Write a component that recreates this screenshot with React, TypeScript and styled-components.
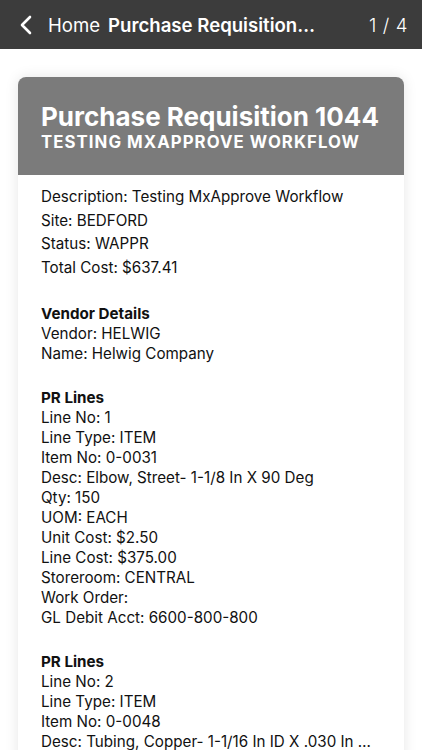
import React from 'react';
import styled, { createGlobalStyle } from 'styled-components';

const GlobalStyle = createGlobalStyle`
  html, body {
    margin: 0;
    padding: 0;
    background: #ffffff;
    font-family: Inter, "Noto Sans", "Liberation Sans", sans-serif;
    color: #111111;
  }
`;

const NavBar = styled.header`
  display: flex;
  align-items: center;
  height: 49px;
  padding: 0 14px 0 19px;
  background: #3c3c3c;
  color: #ffffff;
  font-size: 18.6px;
`;

const BackButton = styled.button`
  display: flex;
  align-items: center;
  gap: 15px;
  padding: 0;
  border: none;
  background: none;
  color: inherit;
  font: inherit;
  cursor: pointer;
`;

const NavTitle = styled.span`
  flex: 1;
  min-width: 0;
  margin-left: 8px;
  font-weight: 600;
  white-space: nowrap;
  overflow: hidden;
  text-overflow: ellipsis;
`;

const Pager = styled.span`
  margin-left: 52px;
  font-weight: 300;
  letter-spacing: 0.6px;
`;

const Page = styled.main`
  padding: 28px 18px 0;
`;

const Card = styled.section`
  border-radius: 8px;
  overflow: hidden;
  background: #ffffff;
  box-shadow: 0 0 14px rgba(0, 0, 0, 0.1);
`;

const CardHeader = styled.div`
  padding: 26px 23px 22px;
  background: #7b7b7b;
  color: #ffffff;
`;

const CardTitle = styled.h1`
  margin: 0;
  font-size: 26px;
  font-weight: 700;
  line-height: 28px;
`;

const CardSubtitle = styled.h2`
  margin: 0;
  font-size: 16.8px;
  font-weight: 700;
  line-height: 22px;
  letter-spacing: 1.05px;
`;

const CardBody = styled.div`
  display: flex;
  flex-direction: column;
  gap: 24px;
  padding: 10px 30px 20px 23px;
  font-size: 15.2px;
`;

const Block = styled.div<{ $spacing: number }>`
  display: flex;
  flex-direction: column;
  line-height: ${(p) => p.$spacing}px;
`;

const BlockTitle = styled.div`
  font-weight: 700;
`;

const Row = styled.div`
  white-space: nowrap;
  overflow: hidden;
  text-overflow: ellipsis;
`;

const summary = [
  'Description: Testing MxApprove Workflow',
  'Site: BEDFORD',
  'Status: WAPPR',
  'Total Cost: $637.41',
];

const vendor = ['Vendor: HELWIG', 'Name: Helwig Company'];

const lines = [
  [
    'Line No: 1',
    'Line Type: ITEM',
    'Item No: 0-0031',
    'Desc: Elbow, Street- 1-1/8 In X 90 Deg',
    'Qty: 150',
    'UOM: EACH',
    'Unit Cost: $2.50',
    'Line Cost: $375.00',
    'Storeroom: CENTRAL',
    'Work Order:',
    'GL Debit Acct: 6600-800-800',
  ],
  [
    'Line No: 2',
    'Line Type: ITEM',
    'Item No: 0-0048',
    'Desc: Tubing, Copper- 1-1/16 In ID X .030 In Wall',
    'Qty: 25',
    'UOM: FOOT',
  ],
];

const Chevron = () => (
  <svg width="14" height="20" viewBox="0 0 14 20" fill="none">
    <path d="M11 2L3 10L11 18" stroke="#ffffff" strokeWidth="2.6" strokeLinecap="round" strokeLinejoin="round" />
  </svg>
);

const App = () => (
  <>
    <GlobalStyle />
    <NavBar>
      <BackButton aria-label="Back to Home">
        <Chevron />
        <span>Home</span>
      </BackButton>
      <NavTitle>Purchase Requisition 1044</NavTitle>
      <Pager>1 / 4</Pager>
    </NavBar>
    <Page>
      <Card>
        <CardHeader>
          <CardTitle>Purchase Requisition 1044</CardTitle>
          <CardSubtitle>TESTING MXAPPROVE WORKFLOW</CardSubtitle>
        </CardHeader>
        <CardBody>
          <Block $spacing={23.7}>
            {summary.map((row) => (
              <Row key={row}>{row}</Row>
            ))}
          </Block>
          <Block $spacing={20}>
            <BlockTitle>Vendor Details</BlockTitle>
            {vendor.map((row) => (
              <Row key={row}>{row}</Row>
            ))}
          </Block>
          {lines.map((line, i) => (
            <Block $spacing={20} key={i}>
              <BlockTitle>PR Lines</BlockTitle>
              {line.map((row) => (
                <Row key={row}>{row}</Row>
              ))}
            </Block>
          ))}
        </CardBody>
      </Card>
    </Page>
  </>
);

export default App;
